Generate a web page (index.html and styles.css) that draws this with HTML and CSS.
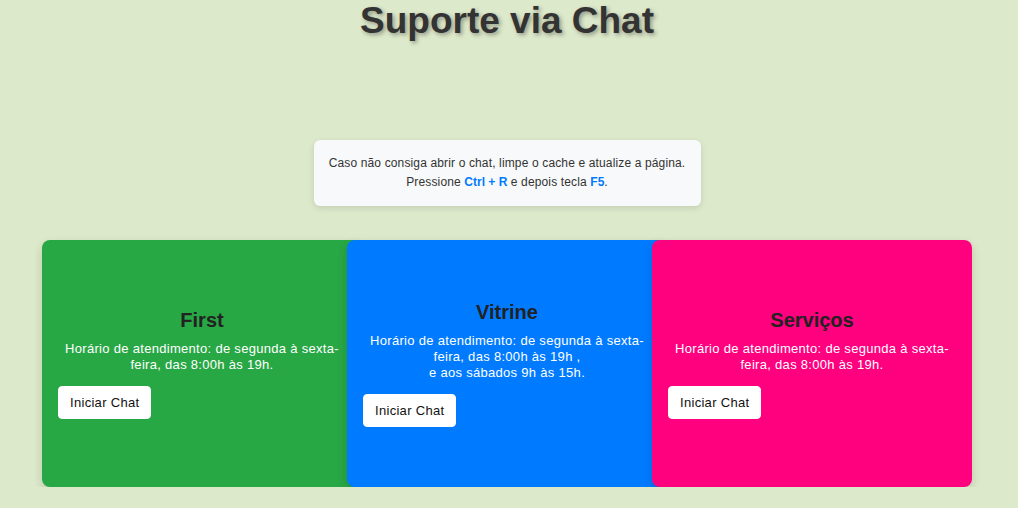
FILE: index.html
```html
<!DOCTYPE html>
<html lang="pt-BR">
<head>
<meta charset="utf-8">
<title>Suporte via Chat</title>
<link rel="stylesheet" href="styles.css">
</head>
<body>
<div class="page">
  <h1 class="title">Suporte via Chat</h1>
  <div class="notice">
    <p>Caso não consiga abrir o chat, limpe o cache e atualize a página.<br>
    Pressione <strong>Ctrl + R</strong> e depois tecla <strong>F5</strong>.</p>
  </div>
  <div class="cards">
    <div class="card card-green">
      <h3 class="card-title">First</h3>
      <p class="card-text">Horário de atendimento: de segunda à sexta-feira, das 8:00h às 19h.</p>
      <button class="btn">Iniciar Chat</button>
    </div>
    <div class="card card-blue">
      <h3 class="card-title">Vitrine</h3>
      <p class="card-text">Horário de atendimento: de segunda à sexta-feira, das 8:00h às 19h ,<br>e aos sábados 9h às 15h.</p>
      <button class="btn">Iniciar Chat</button>
    </div>
    <div class="card card-pink">
      <h3 class="card-title">Serviços</h3>
      <p class="card-text">Horário de atendimento: de segunda à sexta-feira, das 8:00h às 19h.</p>
      <button class="btn">Iniciar Chat</button>
    </div>
  </div>
</div>
</body>
</html>
```

FILE: styles.css
```css
html, body {
  margin: 0;
  padding: 0;
}
body {
  background: #dde9cb;
  font-family: "Liberation Sans", Arial, sans-serif;
  color: #333;
}
.page {
  display: flex;
  flex-direction: column;
  align-items: center;
  padding-right: 4px;
}
.title {
  margin: 0;
  padding-top: 1px;
  font-size: 37px;
  line-height: 40px;
  font-weight: bold;
  color: #333;
  text-shadow: 2px 2px 4px rgba(0, 0, 0, 0.35);
}
.notice {
  margin-top: 99px;
  width: 387px;
  box-sizing: border-box;
  padding: 14px 10px;
  background: #f8f9fa;
  border-radius: 6px;
  box-shadow: 0 2px 6px rgba(0, 0, 0, 0.12);
  text-align: center;
}
.notice p {
  margin: 0;
  font-size: 12px;
  line-height: 19px;
  letter-spacing: 0.14px;
  color: #333;
}
.notice strong {
  color: #007bff;
  letter-spacing: 0;
}
.cards {
  display: flex;
  margin-top: 34px;
}
.card {
  width: 320px;
  height: 247px;
  box-sizing: border-box;
  padding: 0 16px;
  border-radius: 8px;
  box-shadow: 0 4px 10px rgba(0, 0, 0, 0.15);
  display: flex;
  flex-direction: column;
  justify-content: center;
  text-align: center;
  color: #fff;
}
.card + .card {
  margin-left: -15px;
}
.card-green { background: #28a745; }
.card-blue { background: #007bff; }
.card-pink { background: #ff007f; }
.card-title {
  margin: 0 0 9px;
  font-size: 20px;
  line-height: 24px;
  font-weight: bold;
  color: #222;
}
.card-text {
  margin: 0 0 13px;
  font-size: 13px;
  line-height: 16px;
  letter-spacing: 0.3px;
}
.btn {
  align-self: flex-start;
  background: #fff;
  border: 1px solid #fff;
  border-radius: 4px;
  padding: 0 11px;
  height: 33px;
  font-family: "Liberation Sans", Arial, sans-serif;
  font-size: 13px;
  letter-spacing: 0.3px;
  color: #111;
}
```
